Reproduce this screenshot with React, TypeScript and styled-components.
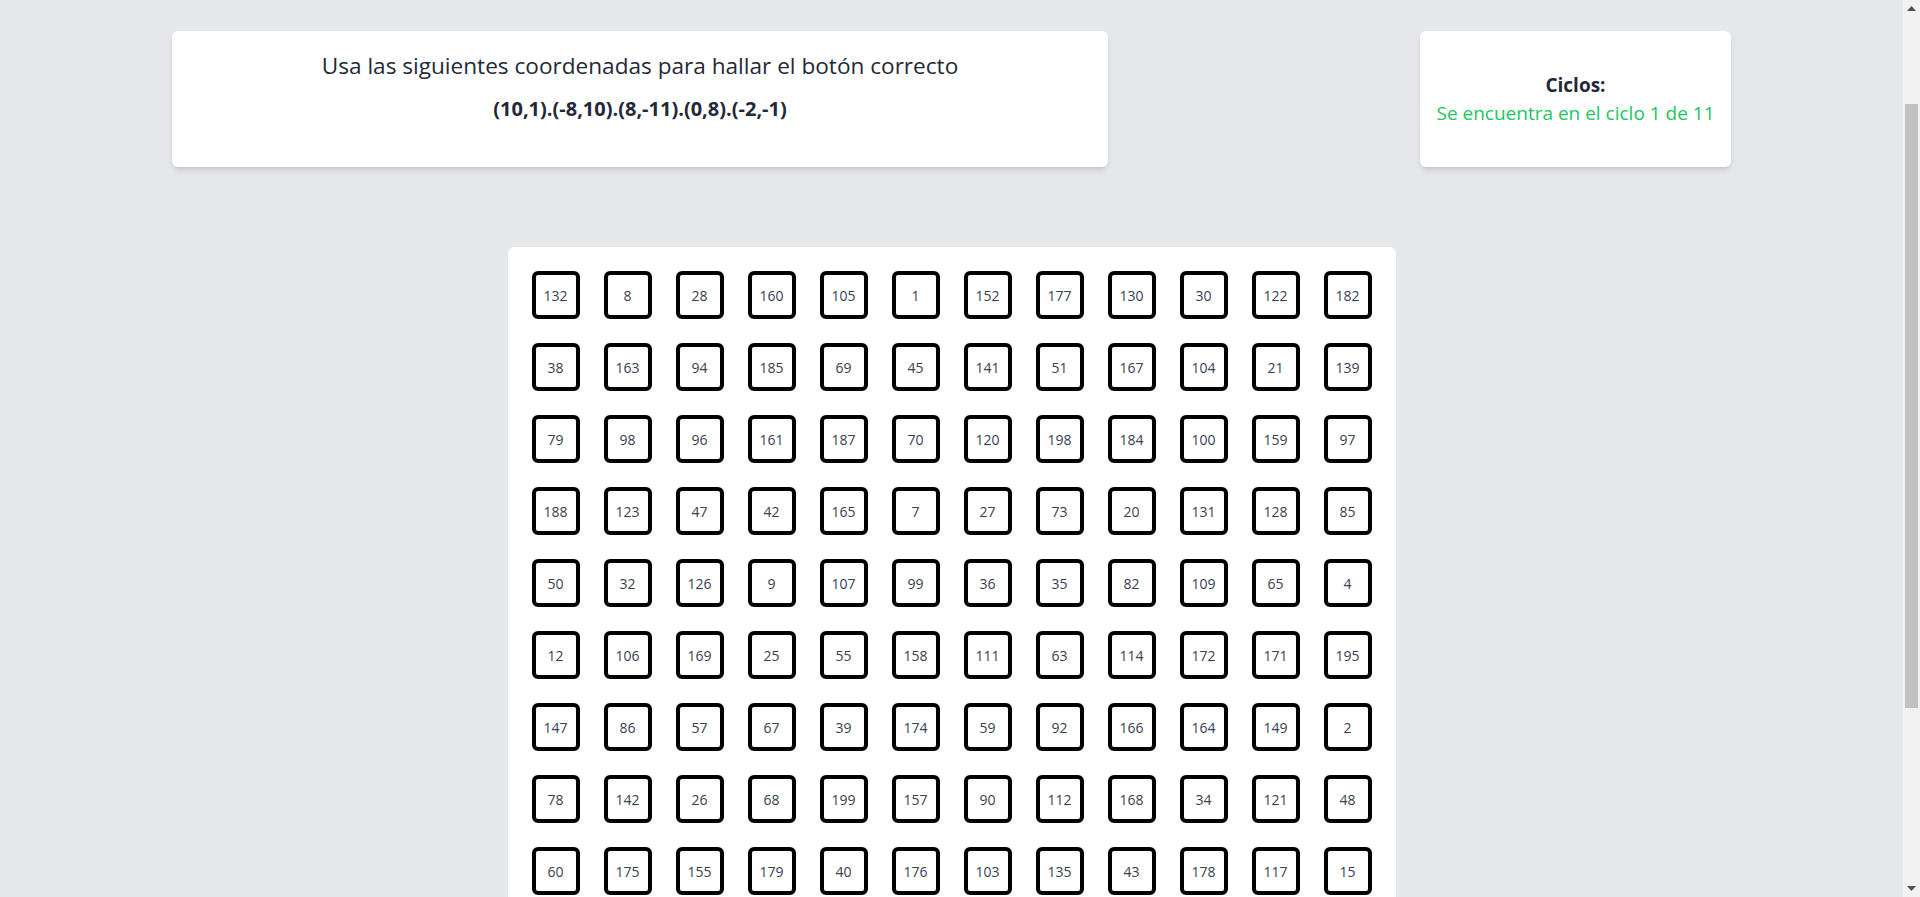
import React, {useLayoutEffect} from 'react';
import styled, {createGlobalStyle} from "styled-components";

const visible = [
    132, 8, 28, 160, 105, 1, 152, 177, 130, 30, 122, 182,
    38, 163, 94, 185, 69, 45, 141, 51, 167, 104, 21, 139,
    79, 98, 96, 161, 187, 70, 120, 198, 184, 100, 159, 97,
    188, 123, 47, 42, 165, 7, 27, 73, 20, 131, 128, 85,
    50, 32, 126, 9, 107, 99, 36, 35, 82, 109, 65, 4,
    12, 106, 169, 25, 55, 158, 111, 63, 114, 172, 171, 195,
    147, 86, 57, 67, 39, 174, 59, 92, 166, 164, 149, 2,
    78, 142, 26, 68, 199, 157, 90, 112, 168, 34, 121, 48,
    60, 175, 155, 179, 40, 176, 103, 135, 43, 178, 117, 15,
]

// 12 x 12 board: fill the last rows with unused numbers, in a mixed order
const rest: number[] = []
for (let i = 0; i < 200 && rest.length < 36; i++) {
    const n = ((i * 77) % 200) + 1
    if (!visible.includes(n)) rest.push(n)
}
const buttons = [...visible, ...rest]

const coords = '(10,1).(-8,10).(8,-11).(0,8).(-2,-1)'

export default function App() {
    useLayoutEffect(() => {
        window.scrollTo(0, 129)
    }, [])

    return (
        <>
            <GlobalStyle/>
            <Page>
                <TopRow>
                    <InstructionCard>
                        <Title>Usa las siguientes coordenadas para hallar el botón correcto</Title>
                        <Coords>{coords}</Coords>
                    </InstructionCard>
                    <CycleCard>
                        <CycleLabel>Ciclos:</CycleLabel>
                        <CycleText>Se encuentra en el ciclo 1 de 11</CycleText>
                    </CycleCard>
                </TopRow>
                <Board>
                    {buttons.map((n, i) => (
                        <NumberButton key={i}>{n}</NumberButton>
                    ))}
                </Board>
            </Page>
            <ScrollTrack>
                <Arrow>
                    <svg width="9" height="5" viewBox="0 0 9 5"><path d="M0 5 L4.5 0 L9 5 Z" fill="#505050"/></svg>
                </Arrow>
                <TrackSpace>
                    <Thumb/>
                </TrackSpace>
                <Arrow>
                    <svg width="9" height="5" viewBox="0 0 9 5"><path d="M0 0 L4.5 5 L9 0 Z" fill="#505050"/></svg>
                </Arrow>
            </ScrollTrack>
        </>
    );
}

const GlobalStyle = createGlobalStyle`
  html, body {
    margin: 0;
    padding: 0;
    background-color: #e5e7eb;
  }
  body {
    font-family: "Open Sans", "Noto Sans", sans-serif;
    color: #1f2937;
  }
`

const Page = styled.div`
  width: calc(100% - 17px);
  padding: 160px 0 17px;
  display: flex;
  flex-direction: column;
  align-items: center;
  gap: 80px;
`

const TopRow = styled.div`
  width: 1559px;
  display: flex;
  justify-content: space-between;
`

const Card = styled.div`
  background-color: #ffffff;
  border-radius: 6px;
  box-shadow: 0 4px 6px -1px rgba(0, 0, 0, 0.1), 0 2px 4px -2px rgba(0, 0, 0, 0.1);
  height: 136px;
  box-sizing: border-box;
`

const InstructionCard = styled(Card)`
  width: 936px;
  padding-top: 19px;
  display: flex;
  flex-direction: column;
  align-items: center;
`

const Title = styled.span`
  font-size: 22.6px;
  line-height: 32px;
  color: #1f2937;
`

const Coords = styled.span`
  margin-top: 13px;
  font-size: 20px;
  line-height: 28px;
  font-weight: 700;
  color: #1f2937;
`

const CycleCard = styled(Card)`
  width: 311px;
  display: flex;
  flex-direction: column;
  align-items: center;
  justify-content: center;
`

const CycleLabel = styled.span`
  font-size: 19px;
  line-height: 28px;
  font-weight: 700;
  color: #1f2937;
`

const CycleText = styled.span`
  font-size: 19px;
  line-height: 28px;
  color: #22c55e;
`

const Board = styled.div`
  width: 888px;
  box-sizing: border-box;
  padding: 12px;
  background-color: #ffffff;
  border-radius: 6px;
  display: flex;
  flex-wrap: wrap;
`

const NumberButton = styled.button`
  width: 48px;
  height: 48px;
  margin: 12px;
  padding: 0;
  box-sizing: border-box;
  background-color: #ffffff;
  border: 4px solid #000000;
  border-radius: 6px;
  font-family: "Open Sans", "Noto Sans", sans-serif;
  font-size: 14px;
  color: #374151;
  cursor: pointer;
`

const ScrollTrack = styled.div`
  position: fixed;
  top: 0;
  right: 0;
  width: 17px;
  height: 100vh;
  background-color: #f1f1f1;
  display: flex;
  flex-direction: column;
`

const Arrow = styled.div`
  height: 17px;
  display: flex;
  align-items: center;
  justify-content: center;
`

const TrackSpace = styled.div`
  flex: 1;
  padding-top: 87px;
`

const Thumb = styled.div`
  margin: 0 2px;
  height: 604px;
  background-color: #c1c1c1;
`
